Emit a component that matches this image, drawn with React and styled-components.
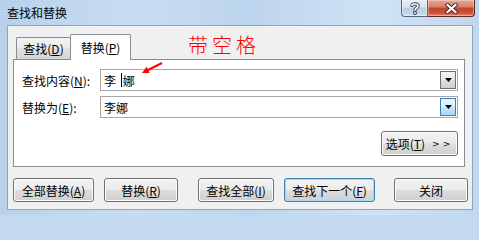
import React from 'react';
import styled, { createGlobalStyle } from 'styled-components';

const Global = createGlobalStyle`
  html, body { margin: 0; padding: 0; overflow: hidden; background: #c4daf1; }
  body { font-family: "Noto Sans CJK SC", "Microsoft YaHei", sans-serif; font-size: 12px; color: #000; }
  u { text-underline-offset: 1px; }
`;

const Window = styled.div`
  position: relative;
  width: 479px;
  height: 215px;
  display: flex;
  flex-direction: column;
  background: linear-gradient(90deg, #b8d0ea 0%, #c8ddf2 28%, #bcd4ed 52%, #d0e3f6 78%, #c0d7ef 100%);
`;

const TitleBar = styled.div`
  height: 25px;
  display: flex;
  align-items: flex-start;
  padding: 0 4px 0 7px;
`;

const Title = styled.div`
  flex: 1;
  line-height: 25px;
  font-size: 12px;
`;

const Caption = styled.div`
  display: flex;
`;

const CapBtn = styled.div`
  width: ${p => p.$w}px;
  height: 17px;
  box-sizing: border-box;
  display: flex;
  align-items: center;
  justify-content: center;
  border: 1px solid ${p => (p.$close ? '#5e2a22' : '#55677e')};
  border-top: none;
  ${p => (p.$close ? 'border-left: none;' : '')}
  border-radius: ${p => (p.$close ? '0 0 4px 0' : '0 0 0 4px')};
  background: ${p =>
    p.$close
      ? 'linear-gradient(#e6a594, #d8806b 42%, #c6452c 52%, #cc4e33 80%, #e28a6e)'
      : 'linear-gradient(#e4edf7, #d3e0ef 45%, #bccde2 52%, #c5d5e8 85%, #d6e3f1)'};
  box-shadow: inset 0 0 0 1px rgba(255, 255, 255, 0.35);
`;

const Body = styled.div`
  position: relative;
  flex: 1;
  margin: 0 6px 5px 7px;
  background: #f0f0f0;
  border: 1px solid #8ea4bf;
  display: flex;
  flex-direction: column;
  padding: 8px 0 0 5px;
`;

const TabStrip = styled.div`
  position: relative;
  z-index: 1;
  height: 26px;
  margin-bottom: -1px;
  padding-left: 3px;
  display: flex;
  align-items: flex-end;
`;

const Tab = styled.div`
  box-sizing: border-box;
  width: ${p => p.$w}px;
  height: ${p => (p.$active ? 26 : 22)}px;
  margin-bottom: ${p => (p.$active ? 0 : 1)}px;
  border: 1px solid #898c95;
  border-bottom: none;
  ${p => (p.$active ? '' : 'border-right: none;')}
  background: ${p => (p.$active ? '#ffffff' : 'linear-gradient(#f3f3f3, #ebebeb 45%, #dedede 55%, #d6d6d6)')};
  display: flex;
  align-items: center;
  justify-content: center;
  border-radius: 2px 2px 0 0;
`;

const Panel = styled.div`
  box-sizing: border-box;
  width: 452px;
  height: 108px;
  border: 1px solid #898c95;
  background: #ffffff;
  padding: 9px 6px 10px 8px;
  display: flex;
  flex-direction: column;
`;

const FieldRow = styled.div`
  display: flex;
  align-items: center;
  height: 22px;
  margin-top: ${p => p.$mt || 0}px;
`;

const Label = styled.div`
  width: 78px;
  flex-shrink: 0;
  white-space: nowrap;
`;

const Combo = styled.div`
  flex: 1;
  height: 22px;
  box-sizing: border-box;
  border: 1px solid #a6a8ad;
  display: flex;
  align-items: center;
  padding: 0 1px 0 3px;
`;

const ComboText = styled.div`
  flex: 1;
  display: flex;
  align-items: center;
  white-space: pre;
`;

const Caret = styled.span`
  display: inline-block;
  width: 1px;
  height: 14px;
  background: #000;
  margin: 0 1px 0 2px;
`;

const DropBtn = styled.div`
  width: 16px;
  height: 18px;
  box-sizing: border-box;
  border: 1px solid ${p => (p.$hot ? '#3c7fb1' : '#707070')};
  background: ${p =>
    p.$hot
      ? 'linear-gradient(#eaf6fd, #d9f0fc 45%, #bee6fd 55%, #a7d9f5)'
      : 'linear-gradient(#f2f2f2, #ebebeb 45%, #dddddd 55%, #cfcfcf)'};
  display: flex;
  align-items: center;
  justify-content: center;
`;

const OptionsRow = styled.div`
  display: flex;
  justify-content: flex-end;
  margin-top: 13px;
`;

const Button = styled.div`
  box-sizing: border-box;
  width: ${p => p.$w}px;
  height: ${p => p.$h || 24}px;
  margin-left: ${p => p.$ml || 0}px;
  border: 1px solid ${p => (p.$default ? '#3c7fb1' : '#707070')};
  border-radius: 3px;
  background: linear-gradient(#f2f2f2, #ebebeb 48%, #dddddd 52%, #cfcfcf);
  box-shadow: inset 0 0 0 1px ${p => (p.$default ? '#a6d8f5' : '#fcfcfc')};
  display: flex;
  align-items: center;
  justify-content: center;
  white-space: nowrap;
`;

const Chevrons = styled.span`
  font-size: 9px;
  letter-spacing: 3px;
  margin-left: 7px;
  font-family: "DejaVu Sans", sans-serif;
`;

const ButtonRow = styled.div`
  display: flex;
  margin-top: 11px;
`;

const Note = styled.div`
  position: absolute;
  left: 188px;
  top: 35px;
  font-size: 20px;
  line-height: 20px;
  letter-spacing: 4px;
  color: #ff0000;
  font-weight: 300;
`;

const Arrow = styled.svg`
  position: absolute;
  left: 138px;
  top: 60px;
`;

const DownArrow = () => (
  <svg width="7" height="4" viewBox="0 0 7 4">
    <polygon points="0,0 7,0 3.5,4" fill="#000" />
  </svg>
);

const HelpIcon = () => (
  <svg width="10" height="13" viewBox="0 0 10 13">
    <g fill="none" strokeLinecap="round" strokeLinejoin="round">
      <path d="M2 3.5 C2 1.5 8 1.2 8 4 C8 6 5 6 5 8.3" stroke="#3a4656" strokeWidth="3.4" />
      <circle cx="5" cy="11" r="1" fill="#3a4656" stroke="#3a4656" strokeWidth="2" />
      <path d="M2 3.5 C2 1.5 8 1.2 8 4 C8 6 5 6 5 8.3" stroke="#ffffff" strokeWidth="1.6" />
      <circle cx="5" cy="11" r="0.9" fill="#ffffff" />
    </g>
  </svg>
);

const CloseIcon = () => (
  <svg width="13" height="11" viewBox="0 0 13 11">
    <g fill="none" strokeLinecap="square">
      <path d="M2.5 2 L10.5 9 M10.5 2 L2.5 9" stroke="#3d2a28" strokeWidth="4" />
      <path d="M2.5 2 L10.5 9 M10.5 2 L2.5 9" stroke="#ffffff" strokeWidth="2.2" />
    </g>
  </svg>
);

export default function App() {
  return (
    <>
      <Global />
      <Window>
        <TitleBar>
          <Title>查找和替换</Title>
          <Caption>
            <CapBtn $w={27}><HelpIcon /></CapBtn>
            <CapBtn $w={47} $close><CloseIcon /></CapBtn>
          </Caption>
        </TitleBar>
        <Body>
          <TabStrip>
            <Tab $w={54}>查找(<u>D</u>)</Tab>
            <Tab $w={61} $active>替换(<u>P</u>)</Tab>
          </TabStrip>
          <Panel>
            <FieldRow>
              <Label>查找内容(<u>N</u>):</Label>
              <Combo>
                <ComboText>李 <Caret />娜</ComboText>
                <DropBtn><DownArrow /></DropBtn>
              </Combo>
            </FieldRow>
            <FieldRow $mt={5}>
              <Label>替换为(<u>E</u>):</Label>
              <Combo>
                <ComboText>李娜</ComboText>
                <DropBtn $hot><DownArrow /></DropBtn>
              </Combo>
            </FieldRow>
            <OptionsRow>
              <Button $w={77} $h={25}>
                选项(<u>T</u>)<Chevrons>&gt;&gt;</Chevrons>
              </Button>
            </OptionsRow>
          </Panel>
          <ButtonRow>
            <Button $w={81}>全部替换(<u>A</u>)</Button>
            <Button $w={74} $ml={10}>替换(<u>R</u>)</Button>
            <Button $w={76} $ml={20}>查找全部(<u>I</u>)</Button>
            <Button $w={91} $ml={10} $default>查找下一个(<u>F</u>)</Button>
            <Button $w={74} $ml={19}>关闭</Button>
          </ButtonRow>
        </Body>
        <Note>带空格</Note>
        <Arrow width="28" height="18" viewBox="0 0 28 18">
          <line x1="24" y1="3" x2="9" y2="10.5" stroke="#ff0000" strokeWidth="2" />
          <polygon points="4,13 11.8,13 8.7,6.7" fill="#ff0000" />
        </Arrow>
      </Window>
    </>
  );
}
